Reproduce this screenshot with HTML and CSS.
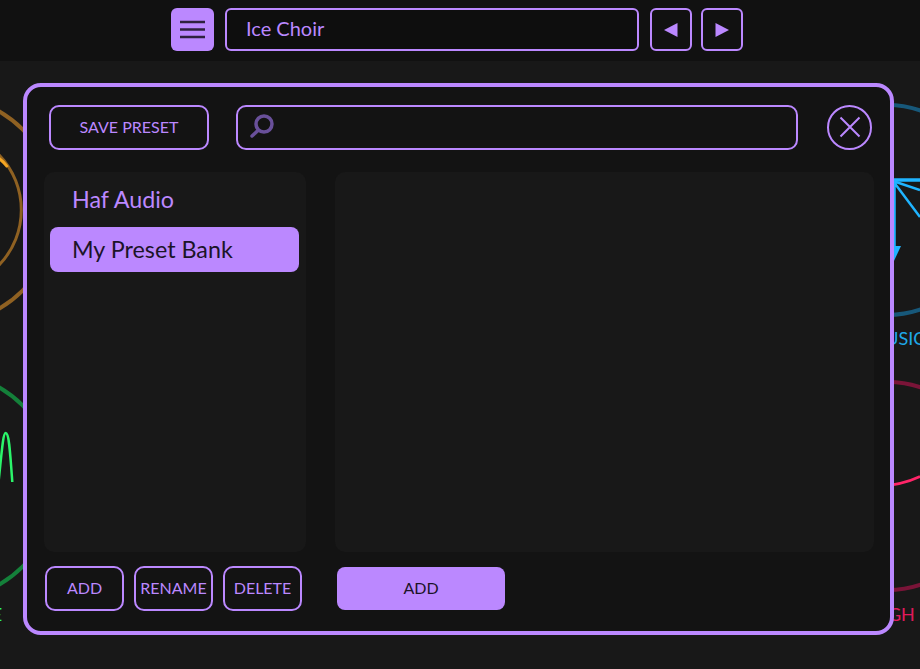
FILE: index.html
```html
<!DOCTYPE html>
<html lang="en">
<head>
<meta charset="utf-8">
<title>Preset Browser</title>
<link rel="stylesheet" href="styles.css">
</head>
<body>
<header class="topbar">
  <button class="menu-btn" aria-label="Menu">
    <svg width="27" height="19" viewBox="0 0 27 19"><path d="M1 2h25M1 9.500h25M1 17h25" stroke="#2e2140" stroke-width="2.400" fill="none"/></svg>
  </button>
  <div class="preset-name">Ice Choir</div>
  <button class="nav-btn" aria-label="Previous"><svg width="14" height="14" viewBox="0 0 14 14"><path d="M0 7 13.500 0v14z" fill="#bb88ff"/></svg></button>
  <button class="nav-btn" aria-label="Next"><svg width="14" height="14" viewBox="0 0 14 14"><path d="M14 7 .5 0v14z" fill="#bb88ff"/></svg></button>
</header>

<svg class="canvas" width="920" height="669" viewBox="0 0 920 669" fill="none">
  <circle cx="-58" cy="210" r="114" stroke="#8f6122" stroke-width="4"/>
  <circle cx="-58" cy="210" r="79.300" stroke="#8f6122" stroke-width="3"/>
  <path d="M-1 158.500Q4 162 7.500 167" stroke="#f5a623" stroke-width="3"/>
  <circle cx="-58" cy="486" r="114" stroke="#14803a" stroke-width="4"/>
  <path d="M-2 487C2 450 3 433 5.700 433C9 433 10 450 12.300 482" stroke="#2bf46a" stroke-width="2.500"/>
  <circle cx="887" cy="210" r="105" stroke="#17587a" stroke-width="4"/>
  <path d="M893 180H920" stroke="#1fb4ff" stroke-width="3.500"/>
  <path d="M893 181 920 190M893 181 920 217M894.500 180V250" stroke="#1fb4ff" stroke-width="2.500"/>
  <path d="M893 246h8l-8 17z" fill="#1fb4ff"/>
  <circle cx="887.500" cy="486" r="104" stroke="#7a1438" stroke-width="4"/>
  <path d="M880 486Q902 485 920 476.500" stroke="#ff2468" stroke-width="2.500"/>
  <text x="897" y="345" class="label-blue">MUSIC</text>
  <text x="892" y="621" class="label-pink">HIGH</text>
  <text x="-3" y="621" class="label-green">E</text>
</svg>

<main class="modal">
  <div class="modal-head">
    <button class="ghost-btn save-btn">SAVE PRESET</button>
    <div class="search">
      <svg width="26" height="26" viewBox="0 0 26 26" fill="none"><circle cx="15" cy="10" r="8" stroke="#69509a" stroke-width="3.500"/><path d="M9 16.500 3 22" stroke="#69509a" stroke-width="3.500" stroke-linecap="round"/></svg>
    </div>
    <button class="close-btn" aria-label="Close">
      <svg width="22" height="22" viewBox="0 0 22 22"><path d="M1.500 1.500l19 19M20.500 1.500l-19 19" stroke="#bb88ff" stroke-width="2" fill="none"/></svg>
    </button>
  </div>
  <div class="modal-body">
    <section class="panel bank-panel">
      <div class="bank">Haf Audio</div>
      <div class="bank bank-active">My Preset Bank</div>
    </section>
    <section class="panel preset-panel"></section>
  </div>
  <div class="modal-foot">
    <div class="foot-left">
      <button class="ghost-btn foot-btn">ADD</button>
      <button class="ghost-btn foot-btn">RENAME</button>
      <button class="ghost-btn foot-btn">DELETE</button>
    </div>
    <button class="solid-btn">ADD</button>
  </div>
</main>
</body>
</html>
```
FILE: styles.css
```css
* { box-sizing: border-box; }
html, body { margin: 0; height: 100%; }
body {
  width: 920px;
  height: 669px;
  overflow: hidden;
  position: relative;
  background: #181818;
  font-family: "Lato", "Noto Sans", sans-serif;
  color: #bb88ff;
}
button { font-family: inherit; padding: 0; cursor: pointer; }

.topbar {
  height: 61px;
  background: #111;
  display: flex;
  align-items: flex-start;
  padding: 8px 0 0 171px;
}
.menu-btn {
  width: 43px;
  height: 43px;
  margin-right: 11px;
  border: 0;
  border-radius: 6px;
  background: #bb88ff;
  display: flex;
  align-items: center;
  justify-content: center;
}
.preset-name {
  width: 414px;
  height: 43px;
  margin-right: 11px;
  border: 2px solid #bb88ff;
  border-radius: 6px;
  padding-left: 19px;
  font-size: 20px;
  line-height: 37px;
  background: #0e0e0e;
}
.nav-btn {
  width: 42px;
  height: 43px;
  margin-right: 9px;
  border: 2px solid #bb88ff;
  border-radius: 6px;
  background: transparent;
  display: flex;
  align-items: center;
  justify-content: center;
}

.canvas { position: absolute; left: 0; top: 0; }
.label-blue, .label-pink, .label-green { font-size: 18px; text-anchor: middle; }
.label-blue { fill: #1fa8e8; }
.label-pink { fill: #e01a5c; }
.label-green { fill: #2bf46a; }

.modal {
  position: absolute;
  left: 23px;
  top: 83px;
  width: 871px;
  height: 552px;
  border: 4px solid #bb88ff;
  border-radius: 18px;
  background: #131313;
  padding: 17px 16px 20px 17px;
  display: flex;
  flex-direction: column;
}
.modal-head {
  height: 46px;
  display: flex;
  align-items: center;
  padding-left: 5px;
}
.ghost-btn {
  border: 2px solid #bb88ff;
  border-radius: 10px;
  background: transparent;
  color: #bb88ff;
  font-size: 16px;
  padding-bottom: 2px;
}
.save-btn { width: 160px; height: 45px; margin-right: 27px; }
.search {
  width: 562px;
  height: 45px;
  margin-right: 29px;
  border: 2px solid #bb88ff;
  border-radius: 10px;
  display: flex;
  align-items: center;
  padding-left: 11px;
}
.close-btn {
  width: 45px;
  height: 45px;
  border: 2px solid #bb88ff;
  border-radius: 50%;
  background: transparent;
  display: flex;
  align-items: center;
  justify-content: center;
}

.modal-body {
  display: flex;
  gap: 29px;
  height: 380px;
  margin-top: 22px;
}
.panel { background: #181818; border-radius: 10px; }
.bank-panel { width: 262px; padding: 5px 7px 5px 6px; display: flex; flex-direction: column; gap: 5px; }
.preset-panel { width: 539px; }
.bank {
  height: 45px;
  padding-left: 22px;
  font-size: 23.300px;
  line-height: 45px;
  border-radius: 8px;
}
.bank-active { background: #bb88ff; color: #1c1428; }

.modal-foot {
  display: flex;
  align-items: center;
  margin-top: 14px;
  padding-left: 1px;
}
.foot-left { display: flex; gap: 10px; margin-right: 35px; }
.foot-btn { width: 79px; height: 45px; }
.solid-btn {
  width: 168px;
  height: 43px;
  border: 0;
  border-radius: 8px;
  background: #bb88ff;
  color: #1c1428;
  font-size: 16px;
  padding-bottom: 2px;
}
```
